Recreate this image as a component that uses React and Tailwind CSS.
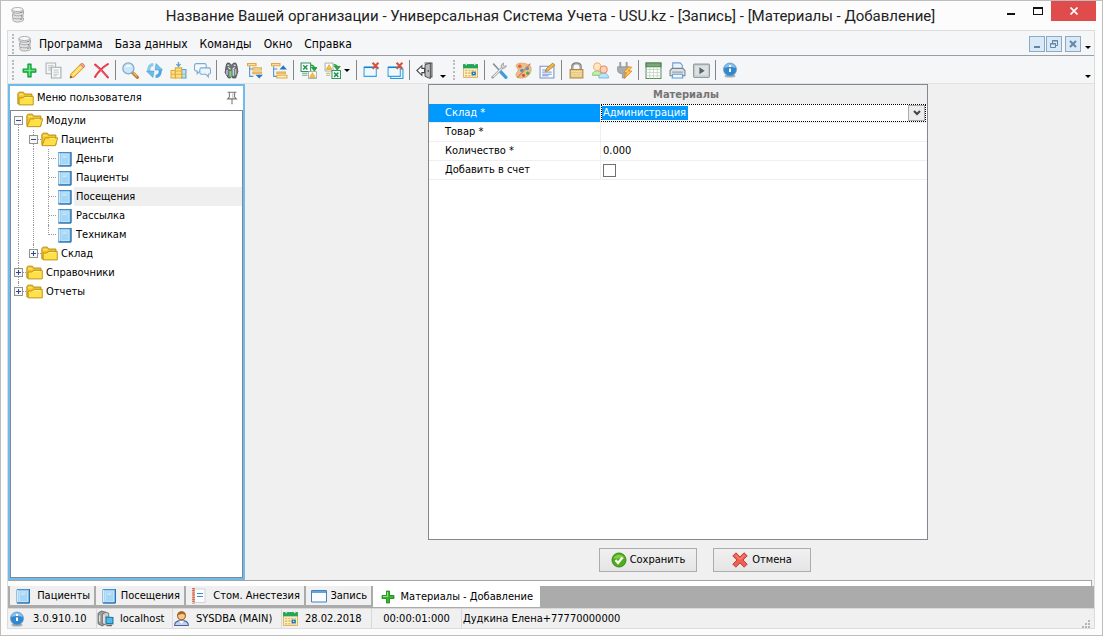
import { useRef, useState } from "react";

function Icon({ children, className = "size-[17px]" }) {
  return (
    <svg viewBox="0 0 16 16" className={`${className} shrink-0`} fill="none" aria-hidden="true">
      {children}
    </svg>
  );
}

function DatabaseIcon() {
  return (
    <Icon className="size-4">
      <g fill="#e2e2e2" stroke="#9a9a9a" strokeWidth=".8">
        <path d="M3 11v2.500c1 2.200 9 2 10.500-.3V11z" />
        <path d="M2.500 7.500v2.800c1 2.200 9 2 10.500-.3V7.500z" />
        <path d="M3 4.500v2.800c1 2.200 9 2 10.500-.3V4z" />
        <path d="M2 2.500v2c1 2.200 9 2.200 11 .2V2.500z" />
        <ellipse cx="7.500" cy="2.500" rx="5.500" ry="2" fill="#f8f8f8" />
      </g>
      <path d="M11 5v1M11.500 8.500v1M11 12v1" stroke="#666" />
    </Icon>
  );
}

function PlusIcon() {
  return (
    <Icon>
      <path d="M6.500 2h3v4.500H14v3H9.500V14h-3V9.500H2v-3h4.500z" fill="#3fd162" stroke="#0b9a35" strokeWidth="1" strokeLinejoin="round" />
      <path d="M8 3v10M3 8h10" stroke="#7be58c" strokeWidth=".8" />
    </Icon>
  );
}

function CopyIcon() {
  return (
    <Icon>
      <path d="M1 1h9v10H1z" fill="#f5f6f6" stroke="#a9b4b4" />
      <path d="M3 3.500h5M3 5.500h3M3 7.500h3" stroke="#b5bebe" />
      <path d="M6 5h9v10H6z" fill="#f8f9f9" stroke="#a0abab" />
      <path d="M8 7.500h5M8 9.500h5M8 11.500h5M8 13h3" stroke="#b5bebe" strokeWidth=".8" />
    </Icon>
  );
}

function PencilIcon() {
  return (
    <Icon>
      <path d="M1 15l1-4L11.500 1.500l3 3L5 14z" fill="#ffd35a" stroke="#c98f1d" strokeWidth=".8" />
      <path d="M3.500 12.500L13 3" stroke="#fff0b0" />
      <path d="M11.500 1.500c1-1 4 1.500 3 3l-1 1-3-3z" fill="#ee9d8d" stroke="#c9775a" strokeWidth=".6" />
      <path d="M1 15l.7-2 1.300 1.300z" fill="#333" />
    </Icon>
  );
}

function DeleteIcon() {
  return (
    <Icon>
      <path d="M2 2.500c4 3 8 7 12 12M14 2C9 5 5 9 2 14" stroke="#e2394a" strokeWidth="2" strokeLinecap="round" />
      <path d="M3 3.500l10 10M12.500 3L3 13" stroke="#ff8a8f" strokeWidth=".5" />
    </Icon>
  );
}

function SearchIcon() {
  return (
    <Icon>
      <path d="M10 10l4.500 4.500" stroke="#b97d37" strokeWidth="3" strokeLinecap="round" />
      <path d="M10.500 10l3.500 3.500" stroke="#f1bb70" strokeWidth="1.200" />
      <circle cx="6" cy="6" r="5.200" fill="#c9e9fb" stroke="#8aa9c4" strokeWidth="1.200" />
      <path d="M2.800 5.500C3.500 2 8 2 9 4.500 7 4 4.500 4.500 2.800 5.500z" fill="#fff" />
    </Icon>
  );
}

function RefreshIcon() {
  return (
    <Icon>
      <path d="M7 2.500C3.500 2.500 2 5.500 2.800 9.500" stroke="#8ccbee" strokeWidth="3" />
      <path d="M.5 8.500h7l-1 6z" fill="#6db9e8" stroke="#4a9fd6" strokeWidth=".6" />
      <path d="M9 13.500c3.500 0 5-3 4.200-7" stroke="#4fa9e0" strokeWidth="3" />
      <path d="M15.500 7.500h-7l1-6z" fill="#6fc3ef" stroke="#4a9fd6" strokeWidth=".6" />
    </Icon>
  );
}

function ImportIcon() {
  return (
    <Icon>
      <path d="M1 8h4v7H1z" fill="#ffe48a" stroke="#dca83b" />
      <path d="M11 7h4v8h-4z" fill="#b8e3fa" stroke="#549fd3" />
      <path d="M5 5.500h6V15H5z" fill="#ffe27a" stroke="#dca83b" />
      <path d="M5 8.500h6M1 11.500h14" stroke="#d9a63c" strokeWidth=".8" />
      <path d="M8 0v4M6 2l2 2 2-2" stroke="#5f9fd0" strokeWidth="1.200" />
    </Icon>
  );
}

function ChatIcon() {
  return (
    <Icon>
      <path d="M2.500 1.500h7.500c1 0 1.500.5 1.500 1.500v4c0 1-.5 1.500-1.500 1.500H5.500L3 11V8.500c-1.500 0-2.500-.5-2.500-1.500V3c0-1 1-1.500 2-1.500z" fill="#f3faff" stroke="#7fa9cc" />
      <path d="M7 5.500h7c1 0 1.500.5 1.500 1.500v3c0 1-.5 1.500-2 1.500V14L11 11.500H7c-1 0-1.500-.5-1.500-1.500V7c0-1 .5-1.500 1.500-1.500z" fill="#eaf6fe" stroke="#7fa9cc" />
    </Icon>
  );
}

function BinocularsIcon() {
  return (
    <Icon>
      <path d="M3 3l1-2h2l2 2 2-2h2l1 2 1 6-2 6H9l-1-2-1 2H5L2 10z" fill="#6d7375" stroke="#3e4040" strokeWidth=".7" />
      <path d="M2.800 7.500h2V12h-2z" fill="#b3a0e0" />
      <path d="M6 8.500h2V14H6z" fill="#73df62" />
      <path d="M9 7h1.500v6H9zM11.500 6.500h1V12h-1z" fill="#c9cfe0" />
      <path d="M4 3h2M10 3h2M5 5l2 2M11 5L9 7" stroke="#e9efef" />
    </Icon>
  );
}

function ExpandTreeIcon({ up }) {
  return (
    <Icon>
      <path d="M2.500 4v9.500H6M2.500 6.500H6" stroke="#4d93ca" />
      <g fill="#fff1b8" stroke="#e2a743">
        <path d="M.5 1.500h8v2h-8z" />
        {!up && <path d="M5.500 5.500h8v2h-8z" />}
        <path d="M5.500 9.500h8v1.500h-8z" />
      </g>
      {up ? (
        <>
          <path d="M5.500 12.500H15V15H5.500z" fill="#fff1b8" stroke="#e2a743" />
          <path d="M8 7l3.500-4L15 7z" fill="#2378c3" />
        </>
      ) : (
        <path d="M8 12h7l-3.500 3.500z" fill="#2378c3" />
      )}
    </Icon>
  );
}

function ExcelExportIcon() {
  return (
    <Icon>
      <path d="M1 1h9v8H1z" fill="#fff" stroke="#32965c" />
      <path d="M3 3l4 4M7 3L3 7" stroke="#269154" strokeWidth="1.400" />
      <path d="M10 3c3 0 3.500 2 3.500 3.500M11.500 5.500l2 2.500 2-2.500z" stroke="#26a33e" strokeWidth="1.400" />
      <path d="M8 9h7.500v6.500H8z" fill="#fff" stroke="#9aa49e" strokeWidth=".8" />
      <path d="M9 14.500l2.700-4.500 2.800 4.500z" fill="#f2c04a" stroke="#d99c24" strokeWidth=".6" />
      <path d="M2 10.500h5M2 12.500h5" stroke="#69ae80" />
    </Icon>
  );
}

function ExcelImportIcon() {
  return (
    <Icon>
      <path d="M1 1h7.500v7.500H1z" fill="#fff" stroke="#9aa49e" strokeWidth=".8" />
      <path d="M2 7l2.700-4.500L7.500 7z" fill="#f2c04a" stroke="#d99c24" strokeWidth=".6" />
      <path d="M9 2.500c3 0 3.500 2 3.500 3M10.500 4.500l2 2.500 2-2.500z" stroke="#26a33e" strokeWidth="1.400" />
      <path d="M7.500 8h8v7.500h-8z" fill="#fff" stroke="#32965c" />
      <path d="M9.500 10l4 4M13.500 10l-4 4" stroke="#269154" strokeWidth="1.400" />
      <path d="M2 10.500h4M2 12.500h4" stroke="#c8b76a" />
    </Icon>
  );
}

function CloseWindowIcon({ stacked }) {
  return (
    <Icon>
      {stacked && <path d="M3.500 6.500h11.500v9H3.500z" fill="#e7f4fd" stroke="#2e96d8" />}
      <path d="M1 5h11.500v8.500H1z" fill="#edf8ff" stroke="#3da0dc" />
      <path d="M1 5h11.500" stroke="#1583cc" strokeWidth="1.400" />
      <path d="M9 .8l5.500 5.500M14.500.8L9 6.300" stroke="#d5533c" strokeWidth="2" />
    </Icon>
  );
}

function ExitIcon() {
  return (
    <Icon>
      <path d="M8 1h7v13h-2" stroke="#555" fill="#d9dcdc" />
      <path d="M8.500 2.500l5-1.500v14.500l-5-2z" fill="#b9bdbd" stroke="#444" strokeWidth=".9" />
      <path d="M5.500 3.500v2.500H8v4H5.500v2.500L.8 8z" fill="#fff" stroke="#444" strokeWidth="1" />
      <circle cx="11.500" cy="8.500" r=".7" fill="#222" />
    </Icon>
  );
}

function CalendarIcon() {
  return (
    <Icon>
      <path d="M1.500 2.500h13v12h-13z" fill="#fff3c9" stroke="#d4a54c" strokeWidth=".8" />
      <path d="M1 2h14v4H1z" fill="#21a558" />
      <path d="M4 1v2M12 1v2" stroke="#d5e9db" strokeWidth="1.400" />
      <path d="M3 8h10M3 10.500h10M3 13h10" stroke="#e9b765" strokeWidth="1.500" strokeDasharray="2 1" />
      <path d="M9 9h4v3.500H9z" fill="#167cbd" />
      <path d="M10.500 10.200h1v1h-1z" fill="#fff" />
    </Icon>
  );
}

function ToolsIcon() {
  return (
    <Icon>
      <path d="M2 1.500L9 9" stroke="#8a9397" strokeWidth="1.500" />
      <path d="M9 9l5 5.500" stroke="#3d9ed6" strokeWidth="3" strokeLinecap="round" />
      <path d="M1.500 14.500L11 5" stroke="#9aa1a5" strokeWidth="2.400" strokeLinecap="round" />
      <path d="M2 14L11 5" stroke="#eef1f2" />
      <path d="M14.500 3.500a3 3 0 0 1-4.500 2c-1-1.500-.3-4 2-4.500l-.5 2 1.300 1z" fill="#d4d9dc" stroke="#889095" strokeWidth=".7" />
    </Icon>
  );
}

function PaletteIcon() {
  return (
    <Icon>
      <path d="M1.500 2.500C4 0 12 1 14.500 4c2 4-.5 9-5 10.500-4 1.500-9 .5-8.500-3 .3-2 2-2 2-4S0 4.500 1.500 2.500z" fill="#e9c18a" stroke="#d3a064" strokeWidth=".7" />
      <circle cx="4.500" cy="4" r="1.700" fill="#ed5c38" />
      <circle cx="11.500" cy="6" r="1.700" fill="#4c9bd5" />
      <circle cx="6.500" cy="8" r="1.700" fill="#3e95d0" />
      <circle cx="12" cy="10.500" r="1.500" fill="#3fad50" />
      <circle cx="8" cy="12.500" r="1.500" fill="#e64b34" />
      <path d="M2 15L14.500 1.500" stroke="#d97b52" strokeWidth="1.200" />
    </Icon>
  );
}

function NoteIcon() {
  return (
    <Icon>
      <path d="M1 4h13v11H1z" fill="#f8fbff" stroke="#7994be" />
      <path d="M3 7.500h4M3 9.500h9M3 11.500h9M3 13h6" stroke="#738ed3" strokeWidth=".9" />
      <path d="M6 9l1-3 6-5 2 2-6 5z" fill="#f3b642" stroke="#a47629" strokeWidth=".7" />
    </Icon>
  );
}

function LockIcon() {
  return (
    <Icon>
      <path d="M4 8V4.500C4 0 12 0 12 4.500V8" stroke="#777b77" strokeWidth="2" />
      <path d="M4 8V4.500C4 .8 12 .8 12 4.500V8" stroke="#c8cbc8" strokeWidth=".7" />
      <path d="M2 7h12v8H2z" fill="#eac77f" stroke="#ac8744" />
      <path d="M3 9h10M3 11h10M3 13h10" stroke="#f7e4b0" strokeWidth=".8" />
    </Icon>
  );
}

function UsersIcon() {
  return (
    <Icon>
      <path d="M.5 12.500C0 7 9 7 9 12.500z" fill="#c4ecaa" stroke="#74c26a" strokeWidth=".8" />
      <circle cx="5" cy="4.500" r="3.500" fill="#ffe7c6" stroke="#f0ac6c" />
      <path d="M6.500 15c-1-6 9.500-6 9 0z" fill="#b9e5fa" stroke="#6cb2de" strokeWidth=".8" />
      <circle cx="11" cy="7" r="3.300" fill="#fcd3b8" stroke="#ea8c6c" />
    </Icon>
  );
}

function PlugIcon() {
  return (
    <Icon>
      <path d="M4 0v5M10 0v5" stroke="#9a9fa0" strokeWidth="1.800" />
      <path d="M1.500 4.500h11V8c0 2-2 3-4 3v4H6v-4C3 11 1.500 9.500 1.500 8z" fill="#a7acaf" stroke="#878d90" strokeWidth=".7" />
      <path d="M12 4.500L7 10h3l-2 5.500 7-7h-3.500L15 5z" fill="#ffc84a" stroke="#eb8624" strokeWidth=".8" />
    </Icon>
  );
}

function SheetIcon() {
  return (
    <Icon>
      <path d="M1 1h14v14.500H1z" fill="#fff" stroke="#5f8b61" />
      <path d="M1 1h14v3.500H1z" fill="#76a878" stroke="#4e8054" />
      <path d="M4.500 4.500v11M8 4.500v11M11.500 4.500v11M1 7h14M1 10h14M1 13h14" stroke="#c1d4c1" strokeWidth=".8" />
    </Icon>
  );
}

function PrinterIcon() {
  return (
    <Icon>
      <path d="M3.500 7V.8h7L12.500 3v4" fill="#e7f4ff" stroke="#6e9acc" />
      <path d="M1 8l2-2h10l2 2v5H1z" fill="#dde2e5" stroke="#77838b" />
      <path d="M3 9.500h10" stroke="#8e99a1" />
      <path d="M3.500 11.500h9l.5 3.500H3z" fill="#eef8ff" stroke="#5f9cd2" />
    </Icon>
  );
}

function PlayIcon() {
  return (
    <Icon>
      <rect x=".5" y="2" width="15" height="12.500" rx="1" fill="#c7d0d2" stroke="#919b9e" />
      <path d="M2 3.500h12v9H2z" fill="#dce1e2" />
      <path d="M6 5l5 3.200-5 3.300z" fill="#59636a" />
    </Icon>
  );
}

function InfoIcon({ className = "size-4" }) {
  return (
    <Icon className={className}>
      <ellipse cx="8" cy="14" rx="5.500" ry="1.500" fill="#a9afb3" />
      <circle cx="8" cy="7.500" r="6.500" fill="#3088d0" stroke="#6f9dc2" strokeWidth=".8" />
      <path d="M2.500 6C3 0 13 0 13.500 6 10 4.500 6 4.500 2.500 6z" fill="#86c2ee" />
      <path d="M8 3v2M8 6.500V10" stroke="#fff" strokeWidth="2" />
    </Icon>
  );
}

function FolderIcon({ open }) {
  return (
    <Icon>
      <path d="M.8 13V3.200L2 2h4l1.200 1.800H14V13z" fill="#f4c52a" stroke="#b58b13" strokeWidth=".9" />
      {open ? (
        <path d="M1 13.800L4 6.500h11.800L13.500 13.800z" fill="#ffdf46" stroke="#bc9115" strokeWidth=".9" />
      ) : (
        <path d="M2 14V7.500h3.500L7 6h8.300v8z" fill="#ffe14b" stroke="#bc9115" strokeWidth=".9" />
      )}
      <path d="M2 4.500h4M8 7h5" stroke="#fff3a0" strokeWidth=".8" />
    </Icon>
  );
}

function BookIcon({ className = "size-4" }) {
  return (
    <Icon className={className}>
      <path d="M2 1.500h12.500V15H2z" fill="#7dbce8" stroke="#4b8fc4" />
      <path d="M2 2h1.500v12.500H2z" fill="#d3edfb" />
      <path d="M4.500 3h8v10.500h-8z" fill="#a5d6f5" stroke="#cfeafa" strokeWidth=".8" />
      <path d="M14.500 1v14H2" stroke="#2f6fae" />
      <path d="M6 5h5M6 6.500h4" stroke="#d8f0fd" strokeWidth=".7" />
    </Icon>
  );
}

function NotebookIcon() {
  return (
    <Icon className="size-4">
      <path d="M3 1h11v13.500H3z" fill="#fbfcff" stroke="#cfd4da" />
      <path d="M2.500 0v15.500" stroke="#d4613b" strokeWidth="2.500" strokeDasharray="1.500 .6" />
      <path d="M6 5.500h6M6 8.500h6" stroke="#4389d3" strokeWidth="1.200" />
    </Icon>
  );
}

function WindowIcon() {
  return (
    <Icon className="size-4">
      <path d="M.5 2.500h15v11.500H.5z" fill="#f8fcff" stroke="#4a7fb9" />
      <path d="M1 3h14v2H1z" fill="#5fa5e2" />
    </Icon>
  );
}

function GreenPlusIcon() {
  return (
    <Icon className="size-4">
      <path d="M6.500 2h3v4.500H14v3H9.500V14h-3V9.500H2v-3h4.500z" fill="#35b72c" stroke="#178017" strokeWidth=".8" />
      <path d="M7.500 3v4.500H3" stroke="#8ee67d" />
    </Icon>
  );
}

function ServerIcon() {
  return (
    <Icon>
      <path d="M1 3l3-2 4 1v11l-3 2-4-2z" fill="#989d9e" stroke="#5c6061" strokeWidth=".8" />
      <path d="M5 4l3-2 3 1v9l-3 2-3-1z" fill="#c7cbcb" stroke="#666a6a" strokeWidth=".8" />
      <path d="M2.500 5v6M6.500 5v7" stroke="#eee" />
      <path d="M8.500 6.500l6.500.5v6l-6.500-.5z" fill="#49bdec" stroke="#246f9d" />
      <path d="M9 14.500h5" stroke="#666" strokeWidth="1.500" />
    </Icon>
  );
}

function UserIcon() {
  return (
    <Icon>
      <path d="M1.500 14.500c0-3 3-4.500 6.500-4.500s6.500 1.500 6.500 4.500z" fill="#c3d0ef" stroke="#50659b" />
      <path d="M5.500 10l2.500 3 2.500-3z" fill="#fff" />
      <circle cx="8" cy="5.500" r="3.700" fill="#f7c98e" stroke="#9b6024" />
      <path d="M4 5c0-5 8-5.500 8 0L9 3.500z" fill="#a96422" />
    </Icon>
  );
}

function OkIcon() {
  return (
    <Icon className="size-4">
      <circle cx="8" cy="8" r="7" fill="#4fad1e" stroke="#39881a" />
      <path d="M2.500 6.500C4 1.500 12 1.500 13.500 6.500z" fill="#86cc48" />
      <path d="M4.500 8l2.500 3 4.500-5.500" stroke="#fff" strokeWidth="2.200" />
    </Icon>
  );
}

function CancelIcon() {
  return (
    <Icon className="size-4">
      <path d="M4 .8L8 5l4-4.200 3.200 3L11 8l4.200 4.200-3 3L8 11l-4.200 4.200-3-3L5 8 .8 4z" fill="#f05e50" stroke="#bb3932" strokeWidth=".9" strokeLinejoin="round" />
      <path d="M3.500 3L8 7.500 12.500 3" stroke="#fb9a87" />
    </Icon>
  );
}

function PinIcon() {
  return (
    <Icon className="size-[14px]">
      <path d="M3 1.500h10M5 2v5l-2 2h10l-2-2V2M8 9v6" stroke="#777" strokeWidth="1.200" />
      <path d="M9 2.500v5.500" stroke="#aaa" />
    </Icon>
  );
}

const MENU = ["Программа", "База данных", "Команды", "Окно", "Справка"];

const TOOLBAR = [
  [
    { label: "Добавить", icon: <PlusIcon /> },
    { label: "Копировать", icon: <CopyIcon /> },
    { label: "Изменить", icon: <PencilIcon /> },
    { label: "Удалить", icon: <DeleteIcon /> },
  ],
  [
    { label: "Поиск", icon: <SearchIcon /> },
    { label: "Обновить", icon: <RefreshIcon /> },
    { label: "Подогнать ширину", icon: <ImportIcon /> },
    { label: "Сообщения", icon: <ChatIcon /> },
  ],
  [
    { label: "Найти", icon: <BinocularsIcon /> },
    { label: "Развернуть все", icon: <ExpandTreeIcon /> },
    { label: "Свернуть все", icon: <ExpandTreeIcon up /> },
  ],
  [
    { label: "Экспорт", icon: <ExcelExportIcon /> },
    { label: "Импорт", icon: <ExcelImportIcon />, menu: true },
  ],
  [
    { label: "Закрыть окно", icon: <CloseWindowIcon /> },
    { label: "Закрыть все окна", icon: <CloseWindowIcon stacked /> },
  ],
  [{ label: "Выход", icon: <ExitIcon /> }],
];

const SERVICE_TOOLBAR = [
  [{ label: "Календарь", icon: <CalendarIcon /> }],
  [
    { label: "Настройки", icon: <ToolsIcon /> },
    { label: "Оформление", icon: <PaletteIcon /> },
    { label: "Заметки", icon: <NoteIcon /> },
  ],
  [
    { label: "Блокировка", icon: <LockIcon /> },
    { label: "Пользователи", icon: <UsersIcon /> },
    { label: "Подключение", icon: <PlugIcon /> },
  ],
  [
    { label: "Таблица", icon: <SheetIcon /> },
    { label: "Печать", icon: <PrinterIcon /> },
    { label: "Видео", icon: <PlayIcon /> },
  ],
  [{ label: "О программе", icon: <InfoIcon /> }],
];

// cells: "toggle" holds the +/- box, "line" a through line, "tee" and "end" a branch
const TREE = [
  { label: "Модули", cells: ["toggle"], open: true, first: true },
  { label: "Пациенты", cells: ["line", "toggle"], open: true },
  { label: "Деньги", cells: ["line", "line", "tee"], leaf: true },
  { label: "Пациенты", cells: ["line", "line", "tee"], leaf: true },
  { label: "Посещения", cells: ["line", "line", "tee"], leaf: true, current: true },
  { label: "Рассылка", cells: ["line", "line", "tee"], leaf: true },
  { label: "Техникам", cells: ["line", "line", "end"], leaf: true },
  { label: "Склад", cells: ["line", "toggle"], last: true },
  { label: "Справочники", cells: ["toggle"] },
  { label: "Отчеты", cells: ["toggle"], last: true },
];

const TABS = [
  { label: "Пациенты", icon: <BookIcon />, width: "w-[86px]" },
  { label: "Посещения", icon: <BookIcon />, width: "w-[90px]" },
  { label: "Стом. Анестезия", icon: <NotebookIcon />, width: "w-[120px]" },
  { label: "Запись", icon: <WindowIcon />, width: "w-[67px]" },
];

function Grip() {
  return <span className="mr-[3px] ml-1 h-5 w-[2px] border-l-2 border-dotted border-[#bcbcbc]" />;
}

function Caret() {
  return (
    <svg viewBox="0 0 6 3" className="h-[3px] w-[6px]" aria-hidden="true">
      <path d="M0 0h6L3 3z" fill="#000" />
    </svg>
  );
}

function ToolGroup({ tools, last }) {
  return (
    <div className="flex items-center">
      {tools.map((tool) => (
        <button key={tool.label} type="button" aria-label={tool.label} className="flex h-6 items-center">
          <span className="flex w-6 justify-center">{tool.icon}</span>
          {tool.menu && (
            <span className="flex w-[10px] items-center">
              <Caret />
            </span>
          )}
        </button>
      ))}
      {!last && <span className="mx-[2px] h-5 w-px bg-[#858585]" />}
    </div>
  );
}

function TreeCell({ kind, row }) {
  const stops = kind === "end" || (kind === "toggle" && row.last);
  return (
    <span className="relative flex h-full w-[15px] shrink-0">
      <span className="w-[7px]" />
      <span className={`flex flex-1 flex-col ${row.first ? "justify-end" : ""}`}>
        <span className={`w-full border-l border-dotted border-[#999] ${stops || row.first ? "h-[10px]" : "h-full"}`}>
          {kind !== "line" && !row.first && <span className="block h-[10px] w-full border-b border-dotted border-[#999]" />}
        </span>
      </span>
      {kind === "toggle" && (
        <button
          type="button"
          aria-label={row.open ? "Свернуть" : "Развернуть"}
          className="absolute top-[5px] left-[3px] flex size-[9px] items-center justify-center border border-[#919191] bg-[#f7f7f7]"
        >
          <svg viewBox="0 0 5 5" className="size-[5px] shrink-0" stroke="#31478f" aria-hidden="true">
            <path d={row.open ? "M0 2.500h5" : "M0 2.500h5M2.500 0v5"} />
          </svg>
        </button>
      )}
    </span>
  );
}

function Sidebar() {
  return (
    <aside className="flex w-[237px] shrink-0 flex-col border-2 border-[#6cbcee] bg-[#f0f0f0]">
      <header className="flex h-[24px] shrink-0 items-center bg-white pr-1 pl-[7px]">
        <FolderIcon />
        <h2 className="flex-1 pl-[3px]">Меню пользователя</h2>
        <button type="button" aria-label="Закрепить">
          <PinIcon />
        </button>
      </header>
      <ul className="flex-1 border border-[#828790] bg-white">
        {TREE.map((row, index) => (
          <li key={index} className="flex h-[19px] items-center">
            {row.cells.map((kind, cell) => (
              <TreeCell key={cell} kind={kind} row={row} />
            ))}
            {row.leaf ? <BookIcon className="h-4 w-[17px]" /> : <FolderIcon open={row.open} />}
            <a href="#" className={`ml-px flex h-full flex-1 items-center pl-[2px] ${row.current ? "bg-[#efefef]" : ""}`}>
              {row.label}
            </a>
          </li>
        ))}
      </ul>
    </aside>
  );
}

function FormRow({ id, label, active, children }) {
  return (
    <div className="flex h-[19px] border-b border-[#efefef]">
      <label
        htmlFor={id}
        className={`flex w-[171px] shrink-0 items-center pl-4 ${active ? "bg-[#0099ff] text-white" : "bg-white"}`}
      >
        {label}
      </label>
      <div className="flex min-w-0 flex-1 items-center border-l border-[#efefef]">{children}</div>
    </div>
  );
}

function MaterialForm() {
  const stock = useRef(null);
  const [item, setItem] = useState("");
  const [amount, setAmount] = useState("0.000");

  return (
    <form className="flex w-full max-w-[500px] flex-1 flex-col" onSubmit={(event) => event.preventDefault()}>
      <div className="flex-1 border border-[#828790] bg-white">
        <h1 className="flex h-[19px] items-center justify-center bg-[#efefef] pl-4 font-bold text-[#757575]">Материалы</h1>
        <FormRow id="stock" label="Склад *" active>
          <div className="mr-px flex h-[18px] w-full items-center border border-dotted border-black">
            <select
              id="stock"
              ref={stock}
              className="h-[14px] appearance-none bg-[#0099ff] px-px text-white outline-none"
            >
              <option>Администрация</option>
            </select>
            <button
              type="button"
              aria-label="Открыть список"
              onClick={() => stock.current.showPicker()}
              className="ml-auto flex h-full w-[17px] items-center justify-center border border-[#acacac] bg-[#ececec]"
            >
              <svg viewBox="0 0 8 6" className="h-[6px] w-2" fill="none" stroke="#444" strokeWidth="2" aria-hidden="true">
                <path d="M1 1l3 3 3-3" />
              </svg>
            </button>
          </div>
        </FormRow>
        <FormRow id="item" label="Товар *">
          <input id="item" value={item} onChange={(event) => setItem(event.target.value)} className="w-full px-[2px] outline-none" />
        </FormRow>
        <FormRow id="amount" label="Количество *">
          <input id="amount" value={amount} onChange={(event) => setAmount(event.target.value)} className="w-full px-[2px] outline-none" />
        </FormRow>
        <FormRow id="invoice" label="Добавить в счет">
          <input id="invoice" type="checkbox" className="ml-[2px] size-[13px] appearance-none border border-[#707070] bg-white checked:bg-[#0099ff]" />
        </FormRow>
      </div>
      <div className="flex justify-center gap-4 py-2 pl-[54px]">
        <button type="submit" className="flex h-6 w-[98px] items-center justify-center gap-[3px] border border-[#acacac] bg-linear-to-b from-[#f0f0f0] to-[#e5e5e5]">
          <OkIcon />
          Сохранить
        </button>
        <button type="button" className="flex h-6 w-[98px] items-center justify-center gap-1 border border-[#acacac] bg-linear-to-b from-[#f0f0f0] to-[#e5e5e5]">
          <CancelIcon />
          Отмена
        </button>
      </div>
    </form>
  );
}

function StatusBar() {
  return (
    <footer className="flex h-5 shrink-0 items-center border-t border-[#d9d9d9] bg-[#f0f0f0]">
      <div className="flex h-full w-[88px] items-center gap-2 pl-px">
        <InfoIcon />
        3.0.910.10
      </div>
      <div className="flex h-full w-[76px] items-center gap-[6px] border-l border-[#d9d9d9]">
        <ServerIcon />
        localhost
      </div>
      <div className="flex h-full w-[109px] items-center gap-[6px] border-l border-[#d9d9d9]">
        <UserIcon />
        SYSDBA (MAIN)
      </div>
      <div className="flex h-full w-[90px] items-center gap-[6px] border-l border-[#d9d9d9]">
        <CalendarIcon />
        28.02.2018
      </div>
      <div className="flex h-full w-[90px] items-center justify-center border-l border-[#d9d9d9]">00:00:01:000</div>
      <div className="flex h-full flex-1 items-center border-l border-[#d9d9d9] pl-px">Дудкина Елена+77770000000</div>
      <svg viewBox="0 0 8 8" className="mr-1 size-2 self-end" fill="#b5b5b5" aria-hidden="true">
        <path d="M0 6h2v2H0zM3 6h2v2H3zM6 6h2v2H6zM3 3h2v2H3zM6 3h2v2H6zM6 0h2v2H6z" />
      </svg>
    </footer>
  );
}

export default function App() {
  return (
    <div className="flex h-screen flex-col border border-[#bdbdbd] bg-[#fcfcfc] font-['DejaVu_Sans_Condensed','DejaVu_Sans',sans-serif] text-[11px] leading-[14px] text-black">
      <header className="flex h-[29px] shrink-0 items-start">
        <div className="pt-[6px] pl-[9px]">
          <DatabaseIcon />
        </div>
        <p className="flex-1 pt-1 pl-[78px] text-center font-[Roboto,'Open_Sans',sans-serif] text-[15px] leading-[22px] whitespace-nowrap text-[#222]">
          Название Вашей организации - Универсальная Система Учета - USU.kz - [Запись] - [Материалы - Добавление]
        </p>
        <button type="button" aria-label="Свернуть" className="flex h-5 w-7 items-center justify-center pt-[6px]">
          <span className="h-[2px] w-2 bg-[#111]" />
        </button>
        <button type="button" aria-label="Развернуть" className="flex h-5 w-[26px] items-center justify-center">
          <span className="h-2 w-[10px] border border-t-2 border-[#111]" />
        </button>
        <button type="button" aria-label="Закрыть" className="mr-[6px] flex h-5 w-[45px] items-center justify-center bg-[#e04b4b]">
          <svg viewBox="0 0 8 8" className="size-2" stroke="#fff" strokeWidth="1.700" aria-hidden="true">
            <path d="M.5.500l7 7M7.500.500l-7 7" />
          </svg>
        </button>
      </header>

      <div className="mr-[7px] mb-[6px] ml-[6px] flex min-h-0 flex-1 flex-col border border-[#dcdcdc] bg-[#f0f0f0]">
        <nav className="flex h-[25px] shrink-0 items-center border-b border-[#9a9da1] bg-[#f5f6f7] pt-px text-[12px]">
          <Grip />
          <DatabaseIcon />
          <div className="ml-[5px] flex gap-3 pl-px">
            {MENU.map((entry) => (
              <button key={entry} type="button">
                {entry}
              </button>
            ))}
          </div>
          <div className="ml-auto flex items-center gap-px">
            <button type="button" aria-label="Свернуть окно" className="flex size-4 justify-center border border-[#8fa9c2] bg-[#d8e9f7] pt-[9px]">
              <span className="h-[2px] w-[6px] bg-[#6685a2]" />
            </button>
            <button type="button" aria-label="Восстановить окно" className="flex size-4 items-center justify-center border border-[#8fa9c2] bg-[#d8e9f7]">
              <svg viewBox="0 0 10 10" className="size-[10px]" fill="none" stroke="#6685a2" aria-hidden="true">
                <path d="M3.500 4V1.500h5v5H7M3 2h6M1.500 4.500h5v4h-5zM1 5h6" />
              </svg>
            </button>
            <button type="button" aria-label="Закрыть документ" className="ml-[2px] flex size-4 items-center justify-center border border-[#8fa9c2] bg-[#d8e9f7]">
              <svg viewBox="0 0 8 8" className="size-2" stroke="#6685a2" strokeWidth="2" aria-hidden="true">
                <path d="M1 1l6 6M7 1L1 7" />
              </svg>
            </button>
            <button type="button" aria-label="Параметры меню" className="flex w-[12px] justify-center pt-[8px]">
              <Caret />
            </button>
          </div>
        </nav>

        <div className="flex h-[28px] shrink-0 items-center border-b border-[#e2e2e2] bg-[#f5f6f7] pt-px">
          <Grip />
          {TOOLBAR.map((tools, index) => (
            <ToolGroup key={index} tools={tools} last={index === TOOLBAR.length - 1} />
          ))}
          <button type="button" aria-label="Кнопки панели" className="flex w-[13px] justify-center pt-[12px]">
            <Caret />
          </button>
          <Grip />
          {SERVICE_TOOLBAR.map((tools, index) => (
            <ToolGroup key={index} tools={tools} last={index === SERVICE_TOOLBAR.length - 1} />
          ))}
          <button type="button" aria-label="Кнопки сервиса" className="ml-auto flex w-[12px] justify-center pt-[12px]">
            <Caret />
          </button>
        </div>

        <div className="flex min-h-0 flex-1">
          <Sidebar />
          <main className="flex flex-1 justify-center pl-[17px]">
            <MaterialForm />
          </main>
        </div>

        <div className="mr-[2px] h-[6px] shrink-0 border-t border-r border-[#a5a5a5] bg-white" />
        <div className="flex h-[22px] shrink-0 bg-[#ababab] pl-[2px]" role="tablist">
          {TABS.map((tab) => (
            <button
              key={tab.label}
              type="button"
              role="tab"
              aria-selected="false"
              className={`${tab.width} mb-[3px] flex items-center justify-between border-r-2 border-[#ababab] bg-[#f0f0f0] pr-1 pl-[5px]`}
            >
              {tab.icon}
              {tab.label}
            </button>
          ))}
          <button type="button" role="tab" aria-selected="true" className="mb-px flex w-[167px] items-center justify-between bg-white px-[7px]">
            <GreenPlusIcon />
            Материалы - Добавление
          </button>
        </div>
        <StatusBar />
      </div>
    </div>
  );
}
